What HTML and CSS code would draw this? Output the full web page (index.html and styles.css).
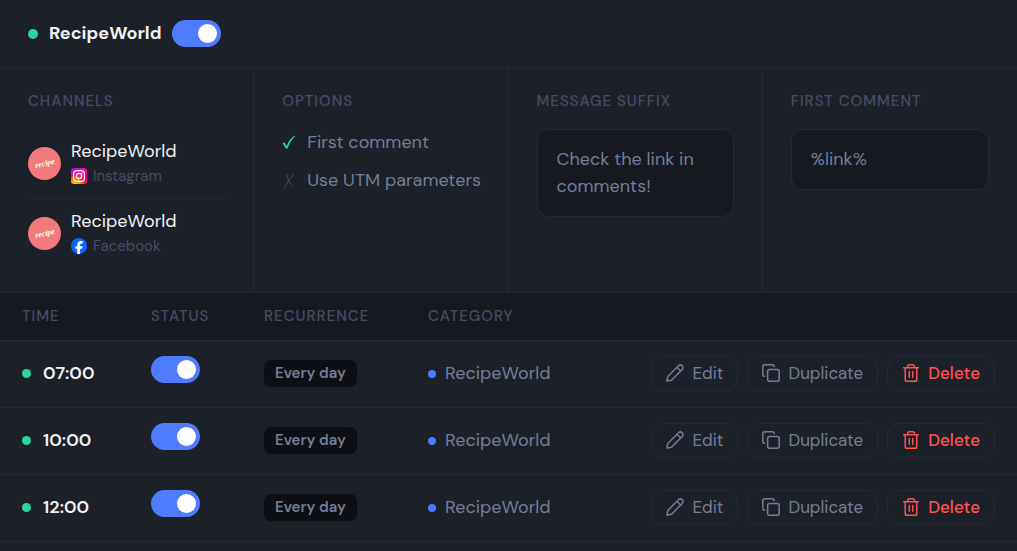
FILE: index.html
```html
<!DOCTYPE html>
<html lang="en">
<head>
  <meta charset="UTF-8">
  <meta name="viewport" content="width=device-width, initial-scale=1.0">
  <title>RecipeWorld schedule</title>
  <link rel="stylesheet" href="styles.css">
</head>
<body>
  <!-- shared icons -->
  <svg class="sprite" aria-hidden="true">
    <symbol id="icon-edit" viewBox="0 0 18 18">
      <path d="M.9 17.100l.9-4.600L12.500 1.800a2.600 2.600 0 0 1 3.700 3.700L5.500 16.200z M11 3.300l3.700 3.700"/>
    </symbol>
    <symbol id="icon-copy" viewBox="0 0 18 18">
      <rect x="5.600" y="5.600" width="11.600" height="11.600" rx="2"/>
      <path d="M2.600 12.200a1.800 1.800 0 0 1-1.800-1.800V2.800a2 2 0 0 1 2-2h7.400a2 2 0 0 1 2 2"/>
    </symbol>
    <symbol id="icon-trash" viewBox="0 0 18 18">
      <path d="M1.600 3.800h14.800M5.600 3.800V2.400A1.600 1.600 0 0 1 7.200.8h3.600a1.600 1.600 0 0 1 1.600 1.600v1.400M3.200 3.800v11.600A1.800 1.800 0 0 0 5 17.200h8a1.800 1.800 0 0 0 1.800-1.800V3.800M7.300 7.600v5.600M10.700 7.600v5.600"/>
    </symbol>
  </svg>

  <header class="header">
    <span class="dot dot-large"></span>
    <h1>RecipeWorld</h1>
    <input type="checkbox" class="toggle" aria-label="RecipeWorld enabled" checked>
  </header>

  <section class="settings">
    <div class="panel">
      <h2>Channels</h2>
      <ul class="channels">
        <li>
          <span class="avatar"><span>recipe</span></span>
          <div>
            <div class="channel-name">RecipeWorld</div>
            <div class="network">
              <svg viewBox="0 0 16 16" aria-hidden="true">
                <defs>
                  <linearGradient id="ig-base" x1="0" y1="0" x2="1" y2="0.6">
                    <stop offset="0" stop-color="#7a1cff"/>
                    <stop offset="0.5" stop-color="#f000c8"/>
                    <stop offset="1" stop-color="#ff0090"/>
                  </linearGradient>
                  <radialGradient id="ig-warm" cx="0.25" cy="1.05" r="0.95">
                    <stop offset="0" stop-color="#ffd600"/>
                    <stop offset="0.35" stop-color="#ff8a00"/>
                    <stop offset="0.65" stop-color="#ff0f5f"/>
                    <stop offset="1" stop-color="#ff0f8f" stop-opacity="0"/>
                  </radialGradient>
                </defs>
                <rect width="16" height="16" rx="3" fill="url(#ig-base)"/>
                <rect width="16" height="16" rx="3" fill="url(#ig-warm)"/>
                <rect x="2.6" y="2.6" width="10.8" height="10.8" rx="3" fill="none" stroke="#fff" stroke-width="1.2"/>
                <circle cx="8" cy="8" r="2.6" fill="none" stroke="#fff" stroke-width="1.2"/>
                <circle cx="11" cy="5" r="0.7" fill="#fff"/>
              </svg>
              Instagram
            </div>
          </div>
        </li>
        <li>
          <span class="avatar"><span>recipe</span></span>
          <div>
            <div class="channel-name">RecipeWorld</div>
            <div class="network">
              <svg viewBox="0 0 16 16" aria-hidden="true">
                <circle cx="8" cy="8" r="8" fill="#0866ff"/>
                <path d="M6.200 16v-5.300H4.300V8.200h1.900V7.100c0-2.800 1.300-4.200 4.100-4.200.5 0 1 .1 1.400.2v2.300h-1c-1.300 0-1.600.5-1.600 1.700v1.100h2.500l-.5 2.500h-2V16z" fill="#fff"/>
              </svg>
              Facebook
            </div>
          </div>
        </li>
      </ul>
    </div>

    <div class="panel">
      <h2>Options</h2>
      <ul class="options">
        <li>
          <svg class="option-on" viewBox="0 0 14 16" aria-hidden="true"><path d="M.6 8.200l1.800-1 2.100 4C6.400 6.500 9 3.200 12.600.6l.4.700C9.700 4.500 7.200 8.500 5.600 13.600H3.800z"/></svg>
          First comment
        </li>
        <li>
          <svg class="option-off" viewBox="0 0 14 16" aria-hidden="true"><path d="M3.200 1.500h1.600c1 4.500 2.800 9.500 5.800 11.500M12 1.500C8 5 4.500 9.500 2.500 15"/></svg>
          Use UTM parameters
        </li>
      </ul>
    </div>

    <div class="panel">
      <h2><label for="suffix">Message suffix</label></h2>
      <textarea id="suffix" rows="2" readonly>Check the link in comments!</textarea>
    </div>

    <div class="panel">
      <h2><label for="comment">First comment</label></h2>
      <textarea id="comment" rows="1" readonly>%link%</textarea>
    </div>
  </section>

  <table class="schedule">
    <thead>
      <tr>
        <th class="col-time">Time</th>
        <th class="col-status">Status</th>
        <th class="col-recurrence">Recurrence</th>
        <th>Category</th>
        <th class="col-actions"></th>
      </tr>
    </thead>
    <tbody>
      <tr>
        <td><div class="time"><span class="dot"></span>07:00</div></td>
        <td class="status"><input type="checkbox" class="toggle" aria-label="07:00 enabled" checked></td>
        <td><span class="badge">Every day</span></td>
        <td><div class="category"><span class="dot dot-blue"></span>RecipeWorld</div></td>
        <td>
          <div class="actions">
            <button type="button"><svg><use href="#icon-edit"/></svg>Edit</button>
            <button type="button"><svg><use href="#icon-copy"/></svg>Duplicate</button>
            <button type="button" class="delete"><svg><use href="#icon-trash"/></svg>Delete</button>
          </div>
        </td>
      </tr>
      <tr>
        <td><div class="time"><span class="dot"></span>10:00</div></td>
        <td class="status"><input type="checkbox" class="toggle" aria-label="10:00 enabled" checked></td>
        <td><span class="badge">Every day</span></td>
        <td><div class="category"><span class="dot dot-blue"></span>RecipeWorld</div></td>
        <td>
          <div class="actions">
            <button type="button"><svg><use href="#icon-edit"/></svg>Edit</button>
            <button type="button"><svg><use href="#icon-copy"/></svg>Duplicate</button>
            <button type="button" class="delete"><svg><use href="#icon-trash"/></svg>Delete</button>
          </div>
        </td>
      </tr>
      <tr>
        <td><div class="time"><span class="dot"></span>12:00</div></td>
        <td class="status"><input type="checkbox" class="toggle" aria-label="12:00 enabled" checked></td>
        <td><span class="badge">Every day</span></td>
        <td><div class="category"><span class="dot dot-blue"></span>RecipeWorld</div></td>
        <td>
          <div class="actions">
            <button type="button"><svg><use href="#icon-edit"/></svg>Edit</button>
            <button type="button"><svg><use href="#icon-copy"/></svg>Duplicate</button>
            <button type="button" class="delete"><svg><use href="#icon-trash"/></svg>Delete</button>
          </div>
        </td>
      </tr>
    </tbody>
  </table>
</body>
</html>
```
FILE: styles.css
```css
* {
  box-sizing: border-box;
}
body {
  margin: 0;
  background: #1c2028;
  color: #747e99;
  font-family: "DM Sans", Inter, "Open Sans", sans-serif;
  font-size: 18px;
  line-height: 27px;
}
h1, h2, ul {
  margin: 0;
  padding: 0;
}
ul {
  list-style: none;
}
.sprite {
  display: none;
}

/* header */
.header {
  display: flex;
  align-items: center;
  gap: 11px;
  height: 68px;
  padding: 0 28px;
  border-bottom: 1px solid #272a36;
}
h1 {
  color: #f1f2f6;
  font-size: 18px;
  font-weight: 700;
}
.dot {
  flex: none;
  width: 9px;
  height: 9px;
  border-radius: 50%;
  background: #2dd49c;
}
.dot-large {
  width: 10px;
  height: 10px;
}
.dot-blue {
  width: 8px;
  height: 8px;
  background: #4f7cff;
}
.toggle {
  appearance: none;
  display: block;
  width: 49px;
  height: 27px;
  margin: 0;
  padding: 4px;
  border-radius: 14px;
  background: #353a4a;
  cursor: pointer;
}
.toggle::before {
  content: "";
  display: block;
  width: 19px;
  height: 19px;
  border-radius: 50%;
  background: #fff;
}
.toggle:checked {
  background: #4f7cff;
}
.toggle:checked::before {
  margin-left: auto;
}

/* settings panels */
.settings {
  display: grid;
  grid-template-columns: repeat(4, minmax(0, 1fr));
  border-bottom: 1px solid #272a36;
}
.panel {
  padding: 20px 28px 24px;
  border-right: 1px solid #272a36;
}
.panel:last-child {
  border-right: none;
}
h2, th {
  color: #474c66;
  font-size: 15px;
  font-weight: 500;
  letter-spacing: 1px;
  text-transform: uppercase;
}
h2 {
  margin-bottom: 14px;
}
.channels li {
  display: flex;
  align-items: center;
  gap: 10px;
  padding: 10px 0;
  line-height: 24px;
}
.channels li + li {
  border-top: 1px solid #272a36;
}
.avatar {
  display: flex;
  align-items: center;
  justify-content: center;
  width: 33px;
  height: 33px;
  border-radius: 50%;
  background: #f2797c;
  color: #fff;
  font: italic bold 8px/12px "Liberation Serif", cursive;
}
.avatar span {
  transform: rotate(-14deg);
}
.channel-name {
  color: #f1f2f6;
}
.network {
  display: flex;
  align-items: center;
  gap: 6px;
  margin-top: 1px;
  color: #474c66;
  font-size: 15px;
}
.network svg {
  width: 16px;
  height: 16px;
}
.options li {
  display: flex;
  align-items: center;
  gap: 11px;
  margin-bottom: 11px;
  white-space: nowrap;
}
.options svg {
  flex: none;
  width: 14px;
  height: 16px;
}
.option-on {
  fill: #2dd49c;
}
.option-off {
  fill: none;
  stroke: #474c66;
}
textarea {
  display: block;
  width: 100%;
  padding: 16px 19px;
  border: 1px solid #272a36;
  border-radius: 12px;
  background: #171920;
  color: inherit;
  font: inherit;
  outline: none;
  overflow: hidden;
  resize: none;
}

/* schedule table */
.schedule {
  width: 100%;
  border-collapse: collapse;
  table-layout: fixed;
}
th, td {
  padding: 0 0 0 22px;
  border-bottom: 1px solid #272a36;
  text-align: left;
}
th {
  height: 47px;
  background: #171920;
}
td {
  height: 67px;
}
.col-time {
  width: 129px;
}
.col-status {
  width: 113px;
}
.col-recurrence {
  width: 164px;
}
.col-actions {
  width: 400px;
}
.time, .category {
  display: flex;
  align-items: center;
}
.time {
  gap: 12px;
  color: #f1f2f6;
  font-weight: 600;
}
.category {
  gap: 9px;
}
.status {
  padding-bottom: 8px;
}
.badge {
  display: inline-block;
  padding: 0 11px;
  border-radius: 7px;
  background: #0e0f14;
  font-size: 15px;
  font-weight: 600;
  vertical-align: middle;
}
.actions {
  display: flex;
  justify-content: flex-end;
  gap: 9px;
  padding-right: 22px;
}
.actions button {
  display: flex;
  align-items: center;
  gap: 8px;
  height: 35px;
  padding: 0 14px 2px;
  border: 1px solid #272a36;
  border-radius: 12px;
  background: none;
  color: #747e99;
  font-family: inherit;
  font-size: 17px;
  cursor: pointer;
}
.actions button:hover {
  background: #171920;
}
.actions svg {
  width: 18px;
  height: 18px;
  fill: none;
  stroke: currentColor;
  stroke-width: 1.5;
  stroke-linecap: round;
  stroke-linejoin: round;
}
.actions .delete {
  color: #ff5252;
  font-weight: 500;
}
```
